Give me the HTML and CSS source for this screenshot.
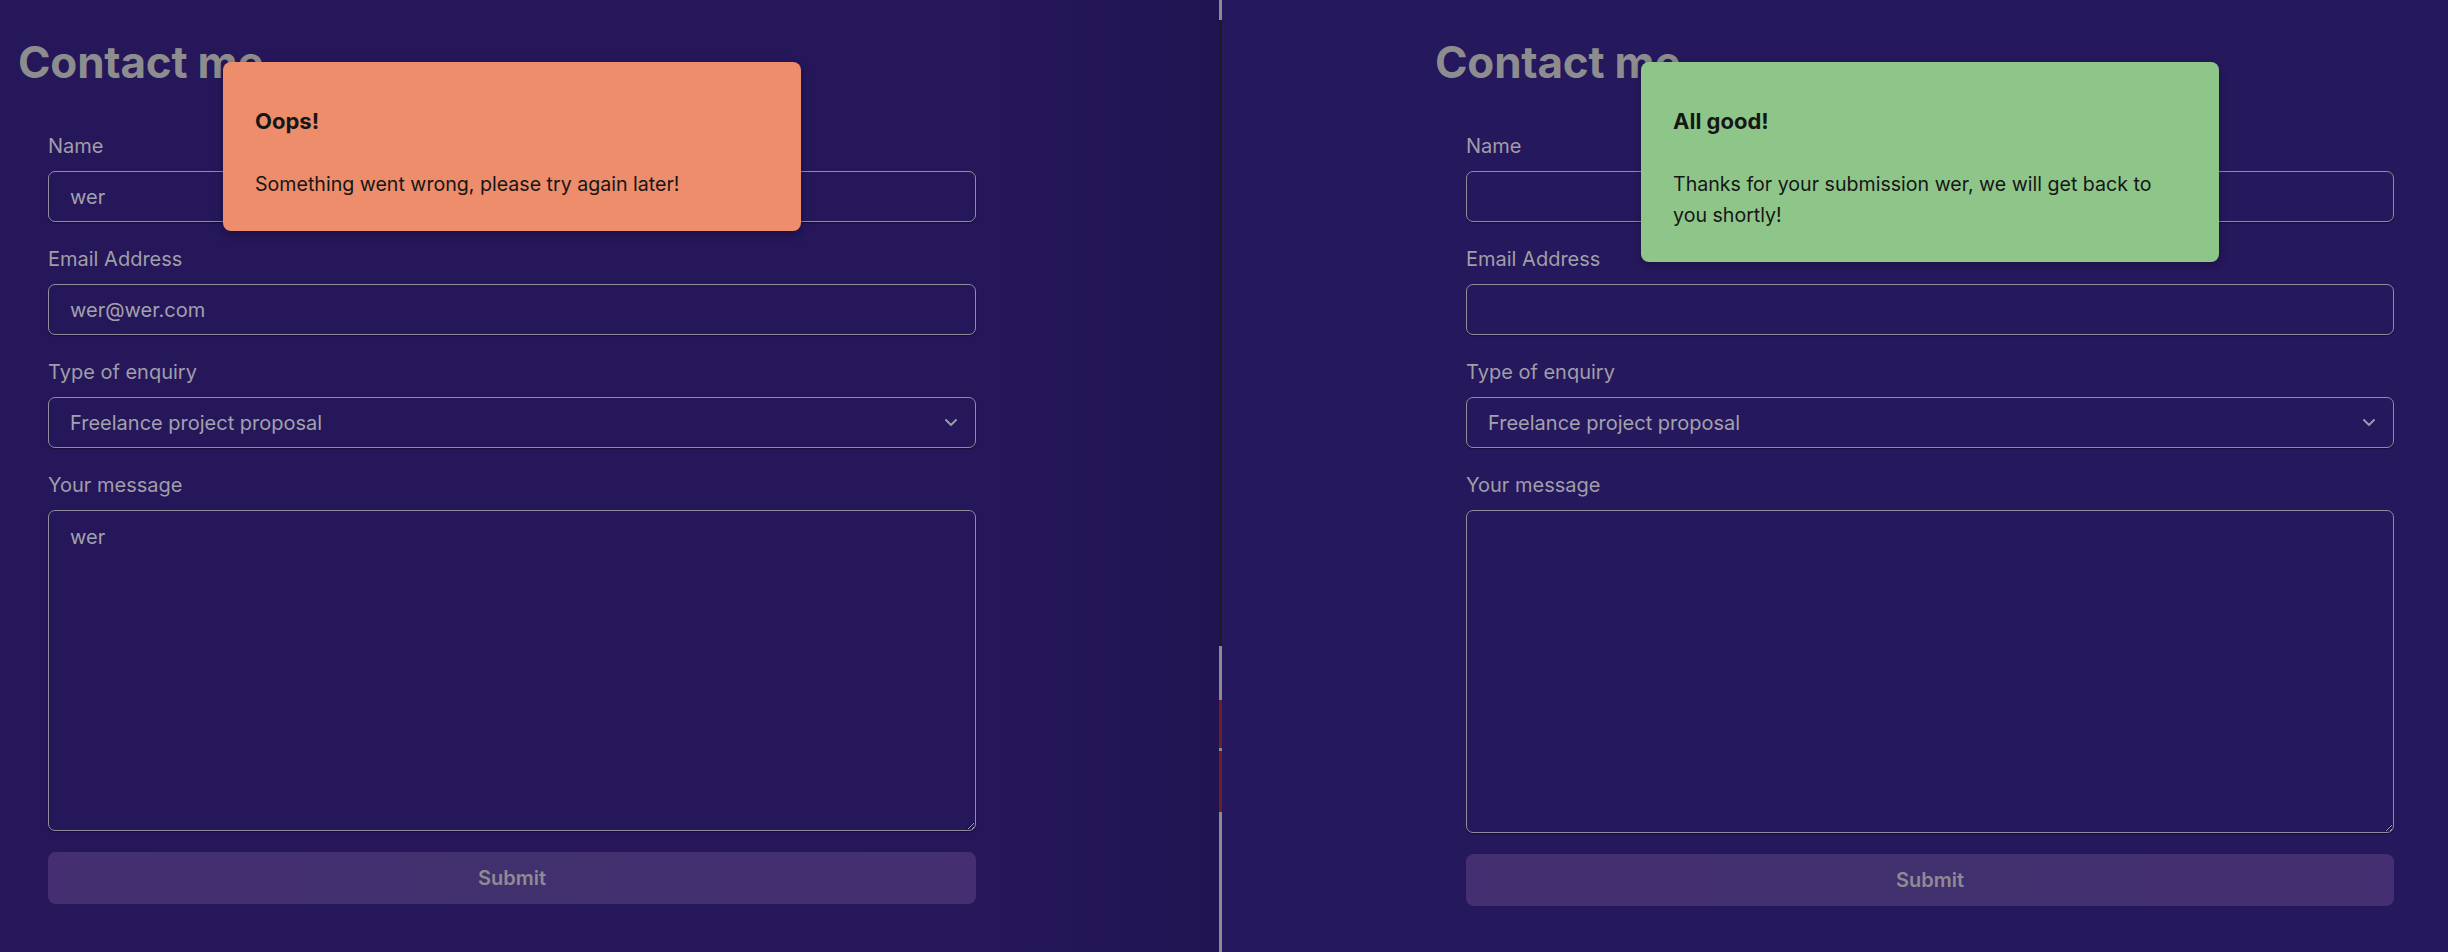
FILE: index.html
```html
<!DOCTYPE html>
<html lang="en">
<head>
<meta charset="utf-8">
<title>Contact me</title>
<link rel="stylesheet" href="styles.css">
</head>
<body>
<div class="screen">
  <section class="pane pane-left">
    <div class="container">
      <h1 class="title">Contact me</h1>
      <form class="form">
        <div class="field">
          <label class="label">Name</label>
          <input class="input" type="text" value="wer">
        </div>
        <div class="field">
          <label class="label">Email Address</label>
          <input class="input" type="email" value="wer@wer.com">
        </div>
        <div class="field">
          <label class="label">Type of enquiry</label>
          <div class="input select">
            <span>Freelance project proposal</span>
            <svg class="chevron" width="14" height="9" viewBox="0 0 14 9"><path d="M2 2 L7 7 L12 2" fill="none" stroke="#9c99a8" stroke-width="2" stroke-linecap="round" stroke-linejoin="round"/></svg>
          </div>
        </div>
        <div class="field">
          <label class="label">Your message</label>
          <textarea class="input textarea">wer</textarea>
        </div>
        <button class="submit" type="button">Submit</button>
      </form>
      <div class="toast toast-error">
        <h2 class="toast-title">Oops!</h2>
        <p class="toast-text">Something went wrong, please try again later!</p>
      </div>
    </div>
  </section>

  <div class="divider">
    <span class="seg seg-gray seg-top"></span>
    <span class="seg seg-dark"></span>
    <span class="seg seg-gray seg-mid"></span>
    <span class="seg seg-red seg-red1"></span>
    <span class="seg seg-gray seg-tiny"></span>
    <span class="seg seg-red seg-red2"></span>
    <span class="seg seg-gray seg-rest"></span>
  </div>

  <section class="pane pane-right">
    <div class="container">
      <h1 class="title">Contact me</h1>
      <form class="form">
        <div class="field">
          <label class="label">Name</label>
          <input class="input" type="text" value="">
        </div>
        <div class="field">
          <label class="label">Email Address</label>
          <input class="input" type="email" value="">
        </div>
        <div class="field">
          <label class="label">Type of enquiry</label>
          <div class="input select">
            <span>Freelance project proposal</span>
            <svg class="chevron" width="14" height="9" viewBox="0 0 14 9"><path d="M2 2 L7 7 L12 2" fill="none" stroke="#9c99a8" stroke-width="2" stroke-linecap="round" stroke-linejoin="round"/></svg>
          </div>
        </div>
        <div class="field">
          <label class="label">Your message</label>
          <textarea class="input textarea"></textarea>
        </div>
        <button class="submit" type="button">Submit</button>
      </form>
      <div class="toast toast-success">
        <h2 class="toast-title">All good!</h2>
        <p class="toast-text">Thanks for your submission wer, we will get back to you shortly!</p>
      </div>
    </div>
  </section>
</div>
</body>
</html>
```

FILE: styles.css
```css
* { box-sizing: border-box; }

html, body {
  margin: 0;
  padding: 0;
  height: 952px;
  overflow: hidden;
  background: #25175a;
  font-family: Inter, "Noto Sans", sans-serif;
}

.screen {
  display: flex;
  width: 2448px;
  height: 952px;
}

.pane {
  height: 952px;
  background: #25175a;
}

.pane-left {
  width: 1219px;
  flex: 0 0 1219px;
  background: linear-gradient(to right, #25175a 0%, #25175a 82%, #211452 100%);
}

.pane-right {
  flex: 1 1 auto;
  background: #26185c;
}

.container {
  position: relative;
  width: 988px;
  padding-top: 36px;
}

.pane-left .container { margin-left: 18px; }
.pane-right .container { margin-left: 213px; }

.title {
  margin: 0;
  font-size: 44px;
  line-height: 53px;
  font-weight: 700;
  color: #8d8d8f;
  letter-spacing: -0.2px;
}

.form {
  display: flex;
  flex-direction: column;
  gap: 23px;
  padding: 43px 30px 0;
}

.pane-right .form { padding-left: 31px; }

.field {
  display: flex;
  flex-direction: column;
}

.label {
  font-size: 20px;
  line-height: 28px;
  color: #a09ea8;
  margin-bottom: 11px;
}

.input {
  width: 928px;
  height: 51px;
  border: 1px solid #8f8c9c;
  border-radius: 7px;
  background: transparent;
  color: #a3a1ad;
  font-family: Inter, "Noto Sans", sans-serif;
  font-size: 20px;
  padding: 0 21px;
  outline: none;
  box-shadow: 0 1px 1px rgba(10, 5, 40, 0.6);
}

.select {
  display: flex;
  align-items: center;
  justify-content: space-between;
  padding-right: 17px;
}

.chevron { display: block; }

.textarea {
  height: 321px;
  padding: 12px 21px;
  line-height: 28px;
  resize: vertical;
}

.pane-right .textarea { height: 323px; }

.submit {
  width: 928px;
  height: 52px;
  margin-top: -2px;
  border: 0;
  border-radius: 8px;
  background: linear-gradient(to right, #452f72, #41306e 50%, #452f72);
  color: #8e8b94;
  font-family: Inter, "Noto Sans", sans-serif;
  font-size: 20px;
  font-weight: 600;
}

.toast {
  position: absolute;
  left: 205px;
  top: 62px;
  width: 578px;
  padding: 44px 32px 31px;
  border-radius: 8px;
  color: #161616;
  box-shadow: 0 3px 8px rgba(8, 4, 30, 0.35);
}

.pane-right .toast { left: 206px; }

.toast-error { background: #ed8d6c; }
.toast-success { background: #8ec68a; }

.toast-title {
  margin: 0 0 33px;
  font-size: 22px;
  line-height: 30px;
  font-weight: 700;
}

.toast-text {
  margin: 0;
  font-size: 19.6px;
  line-height: 31px;
}

.divider {
  flex: 0 0 3px;
  width: 3px;
  height: 952px;
  display: flex;
  flex-direction: column;
}

.seg { display: block; width: 3px; }
.seg-gray { background: #8c8c8e; }
.seg-dark { background: #1d1b26; height: 626px; }
.seg-red { background: #6c1f24; }
.seg-top { height: 20px; }
.seg-mid { height: 54px; }
.seg-red1 { height: 48px; }
.seg-tiny { height: 3px; }
.seg-red2 { height: 61px; }
.seg-rest { flex: 1 1 auto; }
```
